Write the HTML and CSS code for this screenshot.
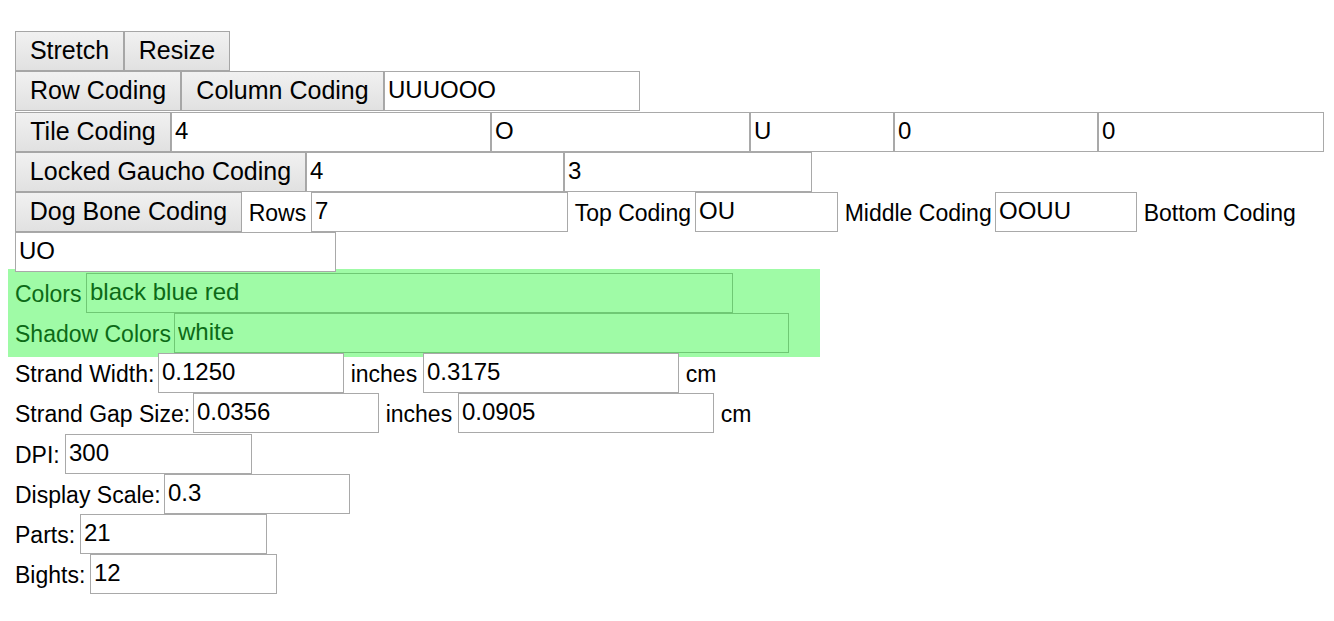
FILE: index.html
```html
<!DOCTYPE html>
<html>
<head>
<meta charset="utf-8">
<title>Braid Coding</title>
<link rel="stylesheet" href="styles.css">
</head>
<body>
<div class="page">
  <div class="row">
    <button class="btn b-stretch">Stretch</button>
    <button class="btn b-resize">Resize</button>
  </div>
  <div class="row">
    <button class="btn b-row">Row Coding</button>
    <button class="btn b-col">Column Coding</button>
    <input class="field w-256" value="UUUOOO">
  </div>
  <div class="row">
    <button class="btn b-tile">Tile Coding</button>
    <input class="field w-320" value="4">
    <input class="field w-259" value="O">
    <input class="field w-144" value="U">
    <input class="field w-204" value="0">
    <input class="field w-226" value="0">
  </div>
  <div class="row">
    <button class="btn b-gaucho">Locked Gaucho Coding</button>
    <input class="field w-258" value="4">
    <input class="field w-248" value="3">
  </div>
  <div class="row row-wrap">
    <button class="btn b-dog">Dog Bone Coding</button>
    <span class="lbl lbl-sp l-rows">Rows</span>
    <input class="field w-257" value="7">
    <span class="lbl lbl-sp l-top">Top Coding</span>
    <input class="field w-143" value="OU">
    <span class="lbl lbl-sp l-mid">Middle Coding</span>
    <input class="field w-142" value="OOUU">
    <span class="lbl lbl-sp l-bottom">Bottom Coding</span>
    <input class="field w-321" value="UO">
  </div>
  <div class="colors">
    <div class="row">
      <span class="lbl l-colors">Colors</span>
      <input class="field w-647" value="black blue red">
    </div>
    <div class="row">
      <span class="lbl l-shadow">Shadow Colors</span>
      <input class="field w-615" value="white">
    </div>
  </div>
  <div class="row">
    <span class="lbl l-width">Strand Width:</span>
    <input class="field w-186" value="0.1250">
    <span class="lbl lbl-sp l-inches">inches</span>
    <input class="field w-256" value="0.3175">
    <span class="lbl lbl-sp">cm</span>
  </div>
  <div class="row">
    <span class="lbl l-gap">Strand Gap Size:</span>
    <input class="field w-186" value="0.0356">
    <span class="lbl lbl-sp l-inches">inches</span>
    <input class="field w-256" value="0.0905">
    <span class="lbl lbl-sp">cm</span>
  </div>
  <div class="row">
    <span class="lbl l-dpi">DPI:</span>
    <input class="field w-187" value="300">
  </div>
  <div class="row">
    <span class="lbl l-scale">Display Scale:</span>
    <input class="field w-186" value="0.3">
  </div>
  <div class="row">
    <span class="lbl l-parts">Parts:</span>
    <input class="field w-187" value="21">
  </div>
  <div class="row">
    <span class="lbl l-bights">Bights:</span>
    <input class="field w-187" value="12">
  </div>
</div>
</body>
</html>
```

FILE: styles.css
```css
html, body {
  margin: 0;
  padding: 0;
  background: #ffffff;
}

body {
  font-family: "Liberation Sans", Arial, sans-serif;
  font-size: 23px;
  color: #000000;
}

.page {
  padding: 31px 8px 0 15px;
}

.row {
  display: flex;
  align-items: center;
  min-height: 40.25px;
}

.row-wrap {
  flex-wrap: wrap;
  row-gap: 0.25px;
  padding-bottom: 0.25px;
}

.btn {
  box-sizing: border-box;
  height: 40px;
  margin: 0;
  padding: 0 0 2px 0;
  border: 1px solid #a6a6a6;
  border-radius: 0;
  background: linear-gradient(#f1f1f1, #e1e1e1);
  font-family: inherit;
  font-size: 25px;
  color: #000000;
  text-align: center;
  line-height: 36px;
}

.b-stretch { width: 109px; }
.b-resize { width: 106px; }
.b-row { width: 166px; }
.b-col { width: 203px; }
.b-tile { width: 156px; }
.b-gaucho { width: 291px; }
.b-dog { width: 227px; }

.field {
  box-sizing: border-box;
  height: 40px;
  margin: 0;
  padding: 0 3px 2px 3px;
  border: 1px solid #a9a9a9;
  border-radius: 0;
  background: #ffffff;
  font-family: inherit;
  font-size: 24px;
  color: #000000;
  outline: none;
}

.w-142 { width: 142px; }
.w-143 { width: 143px; }
.w-144 { width: 144px; }
.w-186 { width: 186px; }
.w-187 { width: 187px; }
.w-204 { width: 204px; }
.w-226 { width: 226px; }
.w-248 { width: 248px; }
.w-256 { width: 256px; }
.w-257 { width: 257px; }
.w-258 { width: 258px; }
.w-259 { width: 259px; }
.w-320 { width: 320px; }
.w-321 { width: 321px; }
.w-615 { width: 615px; }
.w-647 { width: 647px; }

.lbl {
  box-sizing: border-box;
  height: 40px;
  white-space: nowrap;
  line-height: 37px;
  padding-top: 3px;
  padding-right: 6.67px;
}

.lbl-sp { padding-left: 6.67px; }

.l-rows { width: 69px; }
.l-top { width: 127px; }
.l-mid { width: 157px; }
.l-bottom { width: 170px; }
.l-inches { width: 79px; }
.l-colors { width: 71px; }
.l-shadow { width: 159px; }
.l-width { width: 143px; }
.l-gap { width: 178px; }
.l-dpi { width: 50px; }
.l-scale { width: 149px; }
.l-parts { width: 65px; }
.l-bights { width: 75px; }

.colors {
  width: 798px;
  margin: -4px 0 -4px -7px;
  padding: 4px 7px;
  background: #9ffba6;
  color: #0c6a17;
}

.colors .field {
  background: transparent;
  border-color: #6fc874;
  color: #0c6a17;
}
```
